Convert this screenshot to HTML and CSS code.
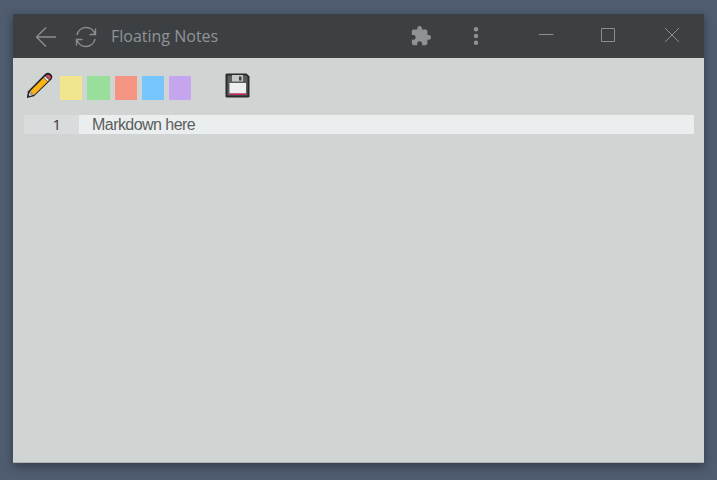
FILE: index.html
```html
<!DOCTYPE html>
<html lang="en">
<head>
<meta charset="utf-8">
<title>Floating Notes</title>
<link rel="stylesheet" href="styles.css">
</head>
<body>
<main class="window">
  <header class="titlebar">
    <svg class="back" width="22" height="22" viewBox="0 0 22 22"><path d="M21 11H2M11 1.500L1.500 11l9.500 9.500"/></svg>
    <svg class="reload" width="24" height="22" viewBox="0 0 24 22"><path d="M3 9A9.300 9.300 0 0 1 21 8M21.500 2.500v6H15.500M21 13A9.300 9.300 0 0 1 3 14M2.500 19.500v-6H8.500"/></svg>
    <h1 class="title">Floating Notes</h1>
    <svg class="extension" width="22" height="22" viewBox="0 0 24 24"><path d="M20.500 11H19V7a2 2 0 0 0-2-2h-4V3.500a2.500 2.500 0 0 0-5 0V5H4a2 2 0 0 0-2 2v3.800h1.500a2.700 2.700 0 0 1 0 5.400H2V20a2 2 0 0 0 2 2h3.800v-1.500a2.700 2.700 0 0 1 5.400 0V22H17a2 2 0 0 0 2-2v-4h1.500a2.500 2.500 0 0 0 0-5z"/></svg>
    <svg class="more" width="6" height="20" viewBox="0 0 6 20"><circle cx="3" cy="3.200" r="2.200"/><circle cx="3" cy="10" r="2.200"/><circle cx="3" cy="16.800" r="2.200"/></svg>
    <div class="controls">
      <svg width="16" height="16" viewBox="0 0 16 16"><path d="M1 7.500h14.500"/></svg>
      <svg width="16" height="16" viewBox="0 0 16 16"><path d="M1.500 1.500h13v13h-13z"/></svg>
      <svg width="16" height="16" viewBox="0 0 16 16"><path d="M1 1l14 14M15 1L1 15"/></svg>
    </div>
  </header>
  <div class="toolbar">
    <svg class="pencil" width="27" height="27" viewBox="0 0 27 27">
      <path fill="#222" d="M.8 26L2 19.300 19 2Q22-.3 24.800 2T25.300 7.500L8 24.300Z"/>
      <path fill="#fbb316" d="M4.400 18.900L17.600 5.800l3.900 3.900L8.300 22.700Z"/>
      <path fill="#d4b187" d="M3.500 20.300L4.400 18.900l3.900 3.800-1.500.6Z"/>
      <path fill="#c8cccb" d="M2.700 23L3.500 20.500l2.800 2.800-2.500 1Z"/>
      <path fill="#e8e5e5" d="M17.900 5.500l1.300-1.300L23 8l-1.300 1.400Z"/>
      <path fill="#d04a60" d="M19.600 3.800Q22 1.700 24 3.400t-.5 4.400Z"/>
    </svg>
    <div class="swatches">
      <span class="swatch yellow"></span>
      <span class="swatch green"></span>
      <span class="swatch red"></span>
      <span class="swatch blue"></span>
      <span class="swatch purple"></span>
    </div>
    <svg class="save" width="25" height="25" viewBox="0 0 25 25">
      <path fill="#292b2b" d="M1.500 .5H21.500L24.500 3.500V23.500L23.500 24.500H1.500L.5 23.500V1.500Z"/>
      <path fill="#5b5e5e" d="M2.500 2.500H21L22.500 4V22.500H2.500Z"/>
      <path fill="#c4c8c8" d="M7 2h11v6.500H7Z"/>
      <path fill="#3d4040" d="M14 3.500h2.500v4H14Z"/>
      <path fill="#eee" d="M4.500 10h16.500V20.500H4.500Z"/>
      <path fill="#c62866" d="M4.500 20.500H21v1.500H4.500Z"/>
    </svg>
  </div>
  <div class="line">
    <span class="gutter">1</span>
    <span class="code">Markdown here</span>
  </div>
</main>
</body>
</html>
```
FILE: styles.css
```css
* { box-sizing: border-box; }

body {
  margin: 0;
  height: 480px;
  padding: 14px 13px 17px;
  overflow: hidden;
  background: #505c70;
}

.window {
  height: 449px;
  background: #d0d4d3;
  box-shadow: 0 3px 9px rgba(20, 28, 40, .5);
  border-bottom: 1px solid #b1b5ae;
}

.titlebar {
  display: flex;
  align-items: center;
  height: 44px;
  padding: 0 24px 0 22px;
  background: #3c4043;
}

.titlebar svg { flex: none; fill: none; stroke: #8b8e90; stroke-width: 1.4; }

.back { margin-top: 2px; }
.reload { margin: 2px 0 0 17px; }

.title {
  width: 299px;
  margin: 0 0 0 13px;
  color: #919496;
  font: 400 16px/22px "Open Sans", "Noto Sans", sans-serif;
}

.titlebar .extension,
.titlebar .more { fill: #8f9294; stroke: none; }
.more { margin-left: 41px; }

.controls {
  display: flex;
  gap: 47px;
  margin: -3px 0 0 59px;
}

.titlebar .controls svg { stroke-width: 1; }
.controls svg:nth-child(2) { margin: 0 1px 0 -1px; }

.toolbar {
  display: flex;
  align-items: flex-start;
  height: 57px;
  padding: 14px 0 0 13px;
}

.swatches {
  display: flex;
  gap: 5px;
  margin: 4px 0 0 7px;
}

.swatch { width: 22.300px; height: 24px; }
.yellow { background: #f1e58d; }
.green { background: #98df9c; }
.red { background: #f49482; }
.blue { background: #76c6fd; }
.purple { background: #c5a5ee; }

.save { margin: 1px 0 0 34px; }

.line {
  display: flex;
  height: 19px;
  margin: 0 10px 0 11px;
  background: #ebeeee;
  line-height: 19px;
}

.gutter {
  width: 55px;
  padding-right: 18px;
  background: #d9dcdc;
  color: #333;
  font-family: "Open Sans", sans-serif;
  font-size: 15px;
  text-align: right;
}

.code {
  padding-left: 13px;
  color: #5b5d5e;
  font-family: "Liberation Sans", Arial, sans-serif;
  font-size: 16px;
  letter-spacing: -.55px;
}
```
